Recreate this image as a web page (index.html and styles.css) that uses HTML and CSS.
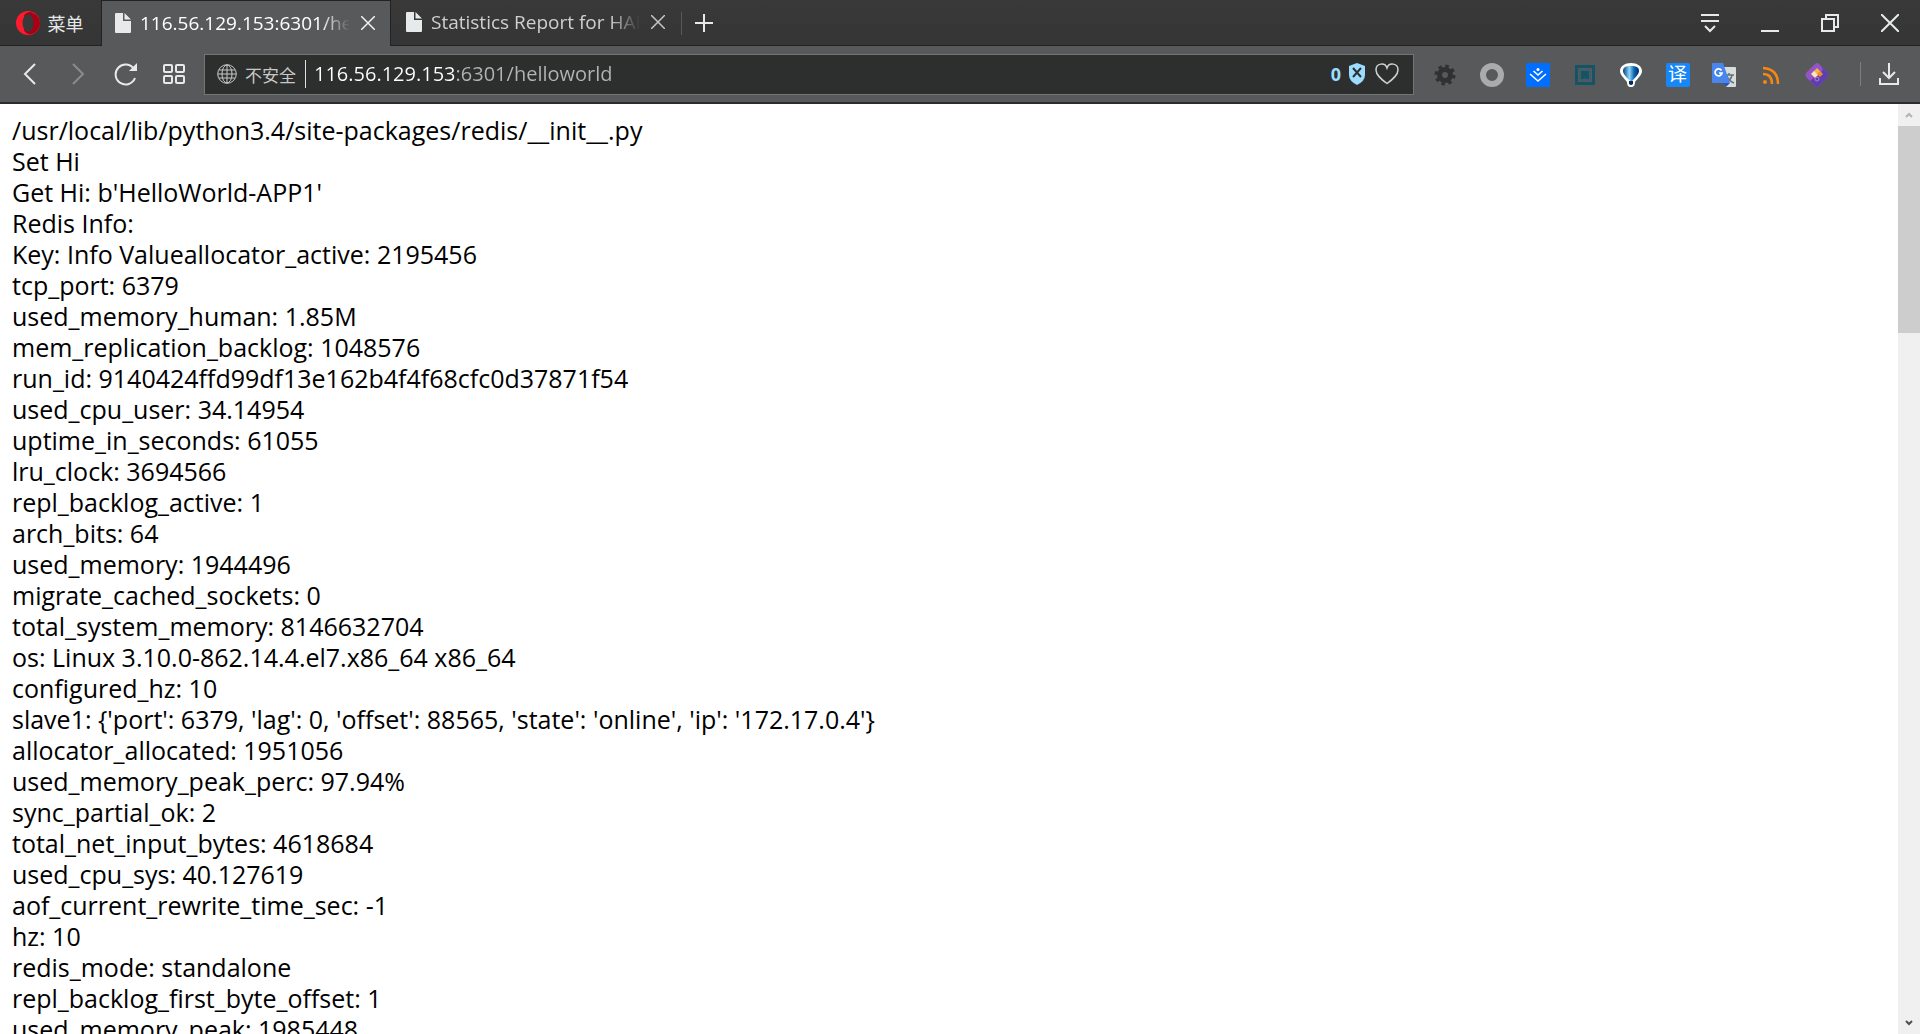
FILE: index.html
```html
<!DOCTYPE html>
<html lang="zh-CN">

<head>
    <meta charset="UTF-8">
    <meta name="viewport" content="width=device-width, initial-scale=1.0">
    <title>116.56.129.153:6301/helloworld</title>
    <link rel="stylesheet" href="styles.css">
</head>

<body>
    <header class="browser">
        <div class="tab-strip">
            <button class="menu-btn" type="button">
                <svg width="24" height="24" viewBox="0 0 24 24">
                    <ellipse cx="12" cy="12" rx="12" ry="12" fill="#ff1b2d" />
                    <path d="M8 4.500c2-3 6-4.500 9-2.500C21 3.500 24 7.500 24 12s-3 8.500-7 10.500c-3 1.500-7 .5-9-3z" fill="#a70014" />
                    <ellipse cx="12" cy="12" rx="5.500" ry="9" fill="#393939" />
                </svg>
                <span>菜单</span>
            </button>

            <div class="tab active">
                <a class="tab-link" href="#page">
                    <svg class="file-icon" width="16" height="20" viewBox="0 0 16 20">
                        <path d="M1 0h7v8h8v11q0 1-1 1H1q-1 0-1-1V1q0-1 1-1zM9.500 0L16 6.500H9.500z" />
                    </svg>
                    <span class="tab-title">116.56.129.153:6301/helloworld</span>
                </a>
                <button class="tab-close" type="button" aria-label="Close tab">
                    <svg width="14" height="14" viewBox="0 0 14 14"><path d="M0 0l14 14M14 0L0 14" /></svg>
                </button>
            </div>

            <div class="tab">
                <a class="tab-link" href="#stats">
                    <svg class="file-icon" width="16" height="20" viewBox="0 0 16 20">
                        <path d="M1 0h7v8h8v11q0 1-1 1H1q-1 0-1-1V1q0-1 1-1zM9.500 0L16 6.500H9.500z" />
                    </svg>
                    <span class="tab-title">Statistics Report for HAProxy</span>
                </a>
                <button class="tab-close" type="button" aria-label="Close tab">
                    <svg width="14" height="14" viewBox="0 0 14 14"><path d="M0 0l14 14M14 0L0 14" /></svg>
                </button>
            </div>

            <button class="new-tab" type="button" aria-label="New tab">
                <svg width="18" height="18" viewBox="0 0 18 18"><path d="M9 0v18M0 9h18" /></svg>
            </button>

            <div class="window-controls">
                <button type="button" aria-label="Tab menu">
                    <svg width="18" height="20" viewBox="0 0 18 20"><path d="M0 2h18M0 8h18M4 13l5 5 5-5" /></svg>
                </button>
                <button type="button" aria-label="Minimize">
                    <svg width="18" height="18" viewBox="0 0 18 18"><path d="M0 17h18" /></svg>
                </button>
                <button type="button" aria-label="Restore">
                    <svg width="18" height="18" viewBox="0 0 18 18"><path d="M1 5h12v12H1zM5 5V1h12v12h-4" /></svg>
                </button>
                <button type="button" aria-label="Close">
                    <svg width="18" height="18" viewBox="0 0 18 18"><path d="M0 0l18 18M18 0L0 18" /></svg>
                </button>
            </div>
        </div>

        <div class="toolbar">
            <nav class="nav-buttons">
                <button type="button" aria-label="Back">
                    <svg width="24" height="24" viewBox="0 0 24 24"><path d="M17 2L7 12l10 10" /></svg>
                </button>
                <button type="button" aria-label="Forward" disabled>
                    <svg width="24" height="24" viewBox="0 0 24 24"><path d="M7 2l10 10L7 22" /></svg>
                </button>
                <button type="button" aria-label="Reload">
                    <svg width="24" height="24" viewBox="0 0 24 24">
                        <path d="M21 16a10 10 0 1 1-1-9" />
                        <path class="solid" d="M23 1v8h-8z" />
                    </svg>
                </button>
                <button type="button" aria-label="Speed dial">
                    <svg width="24" height="24" viewBox="0 0 24 24">
                        <rect x="2" y="3" width="8" height="7" rx="1" />
                        <rect x="14" y="3" width="8" height="7" rx="1" />
                        <rect x="2" y="14" width="8" height="7" rx="1" />
                        <rect x="14" y="14" width="8" height="7" rx="1" />
                    </svg>
                </button>
            </nav>

            <div class="address-bar">
                <button class="site-info" type="button">
                    <svg width="20" height="20" viewBox="0 0 20 20">
                        <circle cx="10" cy="10" r="9.300" />
                        <ellipse cx="10" cy="10" rx="5" ry="9" />
                        <path d="M10 1v18M1 10h18M2 6h16M2 14h16" />
                    </svg>
                    <span>不安全</span>
                </button>
                <input class="url" type="text" value="116.56.129.153:6301/helloworld" aria-label="Address" spellcheck="false">
                <button class="blocker" type="button" aria-label="Ad blocker">
                    <span>0</span>
                    <svg width="18" height="22" viewBox="0 0 18 22">
                        <path d="M9 0l8 3v9q0 6-8 10-8-4-8-10V3z" fill="#9bdcff" />
                        <path d="M5 5l8 9M13 5l-8 9" stroke="#2d2f2e" stroke-width="2" />
                    </svg>
                </button>
                <button class="bookmark" type="button" aria-label="Bookmark">
                    <svg width="24" height="22" viewBox="0 0 24 22">
                        <path d="M12 20.500C6 16 1 12 1 7c0-7 9-8 11-2 2-6 11-5 11 2 0 5-5 9-11 13.500z" />
                    </svg>
                </button>
            </div>

            <div class="extensions">
                <button type="button" aria-label="Settings">
                    <svg width="24" height="24" viewBox="0 0 24 24">
                        <circle cx="12" cy="12" r="5.500" fill="none" stroke="#303232" stroke-width="5" />
                        <circle cx="12" cy="12" r="9" fill="none" stroke="#303232" stroke-width="3" stroke-dasharray="3.500 3.570" />
                    </svg>
                </button>
                <button type="button" aria-label="Recorder">
                    <svg width="24" height="24" viewBox="0 0 24 24">
                        <circle cx="12" cy="12" r="9" fill="none" stroke="#ababab" stroke-width="6" />
                    </svg>
                </button>
                <button type="button" aria-label="Cloud save">
                    <svg width="24" height="24" viewBox="0 0 24 24">
                        <rect width="24" height="24" rx="1" fill="#006eff" />
                        <path d="M4 11l8 7 8-7M7.500 8l4.500 4 4.500-4" fill="none" stroke="#fff" stroke-width="1.600" />
                        <circle cx="12" cy="6.500" r="1.500" fill="#fff" />
                    </svg>
                </button>
                <button type="button" aria-label="Capture">
                    <svg width="24" height="24" viewBox="0 0 24 24">
                        <rect x="3.500" y="3.500" width="17" height="17" fill="none" stroke="#155367" stroke-width="3" />
                        <path d="M8 8h8v8h-3l-1-1-1 1H8z" fill="#155367" />
                        <rect x="7" y="7" width="10" height="10" fill="none" stroke="#2d6070" stroke-width="1" />
                    </svg>
                </button>
                <button type="button" aria-label="Balloon">
                    <svg width="24" height="24" viewBox="0 0 24 24">
                        <defs>
                            <linearGradient id="balloon" x1="0" x2="1">
                                <stop offset="0" stop-color="#083f78" />
                                <stop offset=".4" stop-color="#8fd6f8" />
                                <stop offset=".7" stop-color="#0965b0" />
                                <stop offset="1" stop-color="#052d63" />
                            </linearGradient>
                        </defs>
                        <path d="M12 0c6 0 11 3 11 8 0 4-4 7-7 11 0 3-1 5-4 5s-4-2-4-5C5 15 1 12 1 8c0-5 5-8 11-8z" fill="#fff" />
                        <path d="M12 3c5 0 8 1 8 5 0 3-4 7-7 10h-2C8 15 4 11 4 8c0-4 3-5 8-5z" fill="url(#balloon)" />
                        <path d="M10 18h4v3q-2 2-4 0z" fill="#092c55" />
                    </svg>
                </button>
                <button type="button" aria-label="翻译">
                    <span class="translate-badge">译</span>
                </button>
                <button type="button" aria-label="Translate">
                    <svg width="24" height="24" viewBox="0 0 24 24">
                        <path d="M9 4h14q1 0 1 1v18q0 1-1 1h-9z" fill="#d9dcdc" />
                        <path d="M13 12h9M17 10v2M20 12q-1 5-6 8M15 13q2 5 7 7" fill="none" stroke="#607078" stroke-width="1.500" />
                        <path d="M12 20h6l-4 4z" fill="#2856b8" />
                        <path d="M1 0h10l7 20H1q-1 0-1-1V1q0-1 1-1z" fill="#4886ed" />
                        <path d="M9.500 7.500A3.500 3.500 0 1 0 10 10H7" fill="none" stroke="#fff" stroke-width="1.700" />
                    </svg>
                </button>
                <button type="button" aria-label="RSS">
                    <svg width="24" height="24" viewBox="0 0 24 24">
                        <circle cx="6" cy="19" r="2" fill="#f7870f" />
                        <path d="M4 11q9 0 9 10M4 5q15 1 15 16" fill="none" stroke="#f7870f" stroke-width="2.500" />
                    </svg>
                </button>
                <button type="button" aria-label="Toolbox">
                    <svg width="24" height="24" viewBox="0 0 24 24">
                        <path d="M10 1q2-2 4 0l8 8q3 3 0 5l-8 9q-2 2-4 0l-8-8q-3-3 0-6z" fill="#9454c8" />
                        <path d="M16 3l6 6q3 3 0 5l-8 9q-2 2-4 0l-5-5L18 7z" fill="#5e3fb0" />
                        <path d="M12 5l4 4-4 4-4-4z" fill="#f7b34c" />
                        <path d="M9 8l4 4-3 3-4-4z" fill="#ffe6b8" />
                        <path d="M15 8l3 3-3 3-3-3z" fill="#ef8b31" />
                        <circle cx="12" cy="16" r="2" fill="none" stroke="#c07bd0" stroke-width="1" />
                    </svg>
                </button>
            </div>

            <button class="download" type="button" aria-label="Downloads">
                <svg width="20" height="22" viewBox="0 0 20 22"><path d="M10 0v14M4 9l6 6 6-6M1 15v6h18v-6" /></svg>
            </button>
        </div>
    </header>

    <div class="viewport">
        <main class="page" id="page">
            /usr/local/lib/python3.4/site-packages/redis/__init__.py<br>
            Set Hi<br>
            Get Hi: b'HelloWorld-APP1'<br>
            Redis Info:<br>
            Key: Info Valueallocator_active: 2195456<br>
            tcp_port: 6379<br>
            used_memory_human: 1.85M<br>
            mem_replication_backlog: 1048576<br>
            run_id: 9140424ffd99df13e162b4f4f68cfc0d37871f54<br>
            used_cpu_user: 34.14954<br>
            uptime_in_seconds: 61055<br>
            lru_clock: 3694566<br>
            repl_backlog_active: 1<br>
            arch_bits: 64<br>
            used_memory: 1944496<br>
            migrate_cached_sockets: 0<br>
            total_system_memory: 8146632704<br>
            os: Linux 3.10.0-862.14.4.el7.x86_64 x86_64<br>
            configured_hz: 10<br>
            slave1: {'port': 6379, 'lag': 0, 'offset': 88565, 'state': 'online', 'ip': '172.17.0.4'}<br>
            allocator_allocated: 1951056<br>
            used_memory_peak_perc: 97.94%<br>
            sync_partial_ok: 2<br>
            total_net_input_bytes: 4618684<br>
            used_cpu_sys: 40.127619<br>
            aof_current_rewrite_time_sec: -1<br>
            hz: 10<br>
            redis_mode: standalone<br>
            repl_backlog_first_byte_offset: 1<br>
            used_memory_peak: 1985448<br>
        </main>
        <div class="scrollbar">
            <button type="button" aria-label="Scroll up" disabled>
                <svg width="8" height="6" viewBox="0 0 8 6"><path d="M1 5l3-3 3 3" /></svg>
            </button>
            <div class="track">
                <div class="thumb"></div>
            </div>
            <button type="button" aria-label="Scroll down">
                <svg width="8" height="6" viewBox="0 0 8 6"><path d="M1 1l3 3 3-3" /></svg>
            </button>
        </div>
    </div>
</body>

</html>
```

FILE: styles.css
```css
* {
    margin: 0;
    padding: 0;
    box-sizing: border-box;
}

body {
    height: 100vh;
    display: flex;
    flex-direction: column;
    overflow: hidden;
    font-family: "Open Sans", "Noto Sans CJK SC", sans-serif;
    background: #fff;
    color: #000;
}

button {
    display: flex;
    align-items: center;
    justify-content: center;
    flex-shrink: 0;
    border: none;
    background: none;
    font-family: inherit;
    color: inherit;
}

svg {
    display: block;
    flex-shrink: 0;
    fill: none;
    stroke-width: 2;
}

.browser {
    flex-shrink: 0;
    color: #e6e9ea;
}

/* Tab strip */
.tab-strip {
    display: flex;
    height: 46px;
    background: linear-gradient(#393939, #353535);
    box-shadow: inset 0 -1px #222;
}

.tab-strip svg {
    stroke: #e6eaeb;
}

.menu-btn {
    gap: 8px;
    width: 101px;
    padding-right: 2px;
    font-size: 18px;
}

.menu-btn svg {
    stroke: none;
}

.tab {
    display: flex;
    align-items: center;
    flex: 0 1 290px;
    min-width: 0;
    padding: 0 9px 2px 15px;
    color: #cfcfcf;
}

.tab.active {
    background: #58595b;
    color: #fff;
    padding: 0 8px 1px 13px;
    border: 1px solid #222;
    border-bottom: none;
}

.tab-link {
    display: flex;
    align-items: center;
    gap: 9px;
    flex: 1;
    min-width: 0;
    color: inherit;
    text-decoration: none;
}

.tab-strip .file-icon {
    fill: #e6eaeb;
    stroke: none;
}

.tab-title {
    flex: 1;
    overflow: hidden;
    white-space: nowrap;
    font-size: 19px;
    line-height: 28px;
    mask-image: linear-gradient(to left, transparent, #000 30px);
}

.tab-close {
    width: 28px;
    height: 28px;
    margin-left: 4px;
}

.tab-strip .tab-close svg {
    stroke: #c4c6c7;
    stroke-width: 1.5;
}

.tab-strip .active .tab-close svg {
    stroke: #f0f2f2;
}

.new-tab {
    height: 23px;
    align-self: center;
    padding: 0 13px;
    border-left: 1px solid #58595b;
}

.window-controls {
    display: flex;
    margin-left: auto;
}

.window-controls button {
    width: 60px;
}

/* Toolbar */
.toolbar {
    display: flex;
    align-items: center;
    height: 58px;
    background: #58595b;
    border-bottom: 2px solid #2c2a2b;
}

.nav-buttons {
    display: flex;
    gap: 24px;
    padding: 0 18px;
}

.nav-buttons svg {
    stroke: #e6eaeb;
}

.nav-buttons .solid {
    fill: #e6eaeb;
    stroke: none;
}

.nav-buttons button:disabled {
    opacity: 0.35;
}

.address-bar {
    display: flex;
    align-items: center;
    flex: 1;
    height: 41px;
    padding: 0 14px 0 12px;
    background: #2d2f2e;
    border: 1px solid #737573;
}

.site-info {
    gap: 8px;
    height: 28px;
    padding-right: 9px;
    border-right: 1px solid #e0e0e0;
    font-size: 17px;
    color: #c8c8c8;
}

.site-info svg {
    stroke: #c8c8c8;
    stroke-width: 1;
}

/* Host is drawn white, port and path grey */
.url {
    flex: 1;
    min-width: 0;
    height: 30px;
    margin-left: 8px;
    padding-bottom: 2px;
    border: none;
    outline: none;
    background: linear-gradient(to right, #fff 140px, #b4b4b4 140px);
    background-clip: text;
    color: transparent;
    font-family: inherit;
    font-size: 20px;
}

.blocker {
    gap: 7px;
    font-size: 18px;
    font-weight: 700;
    color: #9bdcff;
}

.bookmark {
    margin-left: 9px;
}

.bookmark svg {
    stroke: #d0d0d0;
    stroke-width: 1.5;
}

.extensions {
    display: flex;
    justify-content: space-between;
    flex: 0 0 446px;
    padding: 2px 31px 0 19px;
}

.translate-badge {
    width: 24px;
    height: 24px;
    border-radius: 2px;
    background: #1686f8;
    color: #fff;
    font-size: 19px;
    line-height: 23px;
    text-align: center;
}

.download {
    height: 24px;
    padding: 0 21px 0 18px;
    border-left: 1px solid #7e7e80;
}

.download svg {
    stroke: #e6eaeb;
}

/* Page */
.viewport {
    display: flex;
    flex: 1;
    min-height: 0;
}

.page {
    flex: 1;
    overflow: hidden;
    padding: 11px 12px;
    font-size: 25px;
    line-height: 31px;
}

.scrollbar {
    display: flex;
    flex-direction: column;
    width: 22px;
    background: #f0f0f0;
}

.scrollbar button {
    height: 22px;
}

.scrollbar svg {
    stroke: #505050;
}

.scrollbar button:disabled svg {
    stroke: #b4b4b4;
}

.track {
    flex: 1;
}

.thumb {
    height: 23.4%;
    background: #cdcdcd;
}
```
